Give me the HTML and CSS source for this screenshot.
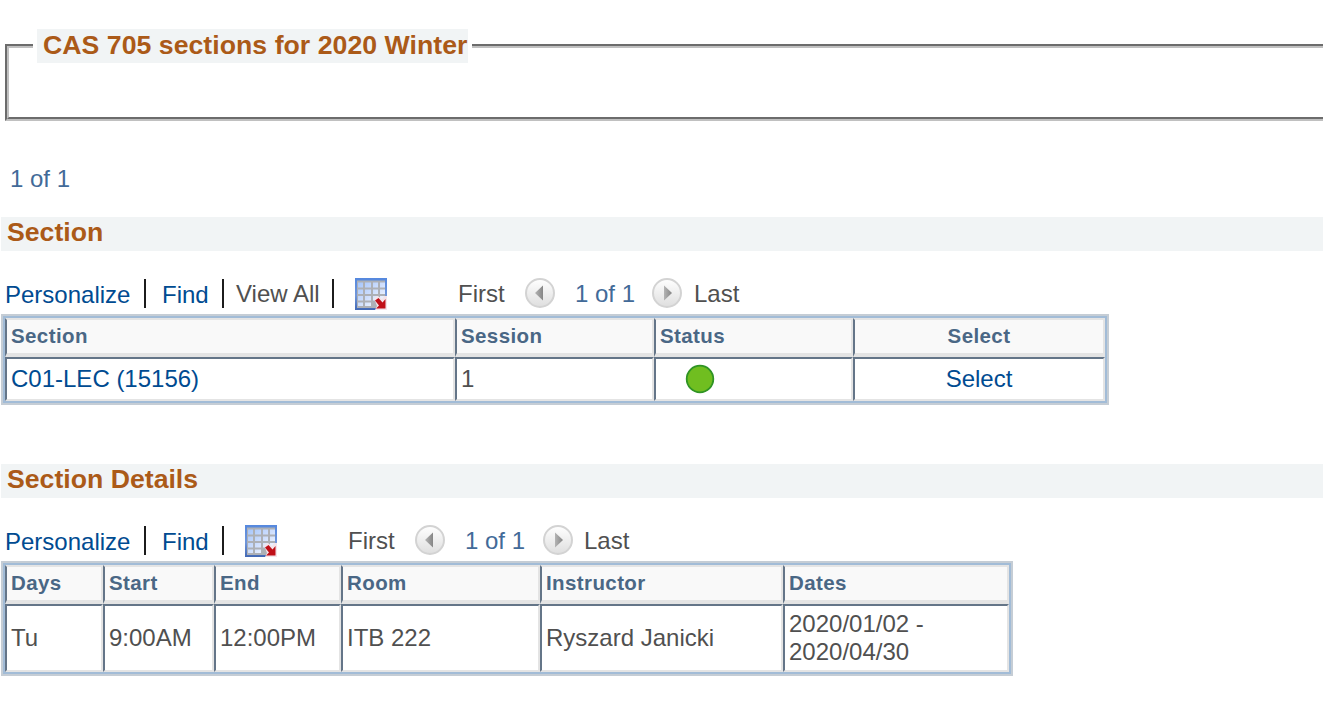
FILE: index.html
```html
<!DOCTYPE html>
<html lang="en">
<head>
<meta charset="utf-8">
<title>CAS 705 sections for 2020 Winter</title>
<link rel="stylesheet" href="styles.css">
</head>
<body>
<svg class="defs" width="0" height="0" aria-hidden="true">
  <defs>
    <linearGradient id="frame" x1="0" y1="0" x2="0" y2="1"><stop offset="0" stop-color="#5588de"/><stop offset=".55" stop-color="#7096da"/><stop offset="1" stop-color="#4268b4"/></linearGradient>
    <linearGradient id="cells" x1="0" y1="0" x2="1" y2="1"><stop offset="0" stop-color="#a6c6fc"/><stop offset=".5" stop-color="#cfdffd"/><stop offset="1" stop-color="#fff"/></linearGradient>
    <linearGradient id="disc" x1="0" y1="0" x2="0" y2="1"><stop offset="0" stop-color="#fff"/><stop offset="1" stop-color="#dedede"/></linearGradient>
    <linearGradient id="arrow" x1="0" y1="0" x2="1" y2="0"><stop offset="0" stop-color="#b4b4b4"/><stop offset="1" stop-color="#858585"/></linearGradient>
    <symbol id="grid" viewBox="0 0 32 32">
      <path fill="url(#frame)" d="M0 0h32v32H0z"/>
      <path fill="#adb0b6" d="M2 2.500h28v27.500H2z"/>
      <path fill="url(#cells)" d="M3 4.500h5v5H3zM10 4.500h6v5h-6zM18 4.500h5v5h-5zM25 4.500h5v5h-5zM3 11.500h5v4.500H3zM10 11.500h6v4.500h-6zM18 11.500h5v4.500h-5zM25 11.500h5v4.500h-5zM3 18h5v4.500H3zM10 18h6v4.500h-6zM18 18h5v4.500h-5zM25 18h5v4.500h-5zM3 24.500h5v3.500H3zM10 24.500h6v3.500h-6z"/>
      <path fill="#f3e4ea" d="M19 20l4-2 4 3 2-3h3v14H20l2-4z"/>
      <path fill="#c01018" d="M20 22.500l3.500-2.500 4 4.500L30.500 21v9.500H21l3-3z"/>
    </symbol>
    <symbol id="prev" viewBox="0 0 30 30"><circle cx="15" cy="15" r="14" fill="url(#disc)" stroke="#d3d3d3" stroke-width="2"/><path fill="url(#arrow)" d="M10 15l8-7.500v15z"/></symbol>
    <symbol id="next" viewBox="0 0 30 30"><circle cx="15" cy="15" r="14" fill="url(#disc)" stroke="#d3d3d3" stroke-width="2"/><path fill="url(#arrow)" d="M20 15l-8-7.500v15z"/></symbol>
  </defs>
</svg>
<fieldset class="summary"><legend><span>CAS 705 sections for 2020 Winter</span></legend></fieldset>
<div class="count">1 of 1</div>

<h2 class="bar">Section</h2>
<div class="tools tools-section">
  <a class="low">Personalize</a><i class="sep"></i><a class="low">Find</a><i class="sep"></i><span>View All</span><i class="sep"></i>
  <svg class="sheet"><use href="#grid"/></svg>
  <span>First</span><svg class="nav"><use href="#prev"/></svg><span class="range">1 of 1</span><svg class="nav"><use href="#next"/></svg><span>Last</span>
</div>
<div class="table table-section">
  <div class="th">Section</div><div class="th">Session</div><div class="th">Status</div><div class="th center">Select</div>
  <div class="td"><a>C01-LEC (15156)</a></div><div class="td">1</div><div class="td"><svg class="open" viewBox="0 0 30 30"><circle cx="15" cy="15" r="13.3" fill="#70be20" stroke="#2f9424" stroke-width="1.8"/></svg></div><div class="td center"><a>Select</a></div>
</div>

<h2 class="bar bar-details">Section Details</h2>
<div class="tools tools-details">
  <a class="low">Personalize</a><i class="sep"></i><a class="low">Find</a><i class="sep"></i>
  <svg class="sheet"><use href="#grid"/></svg>
  <span>First</span><svg class="nav"><use href="#prev"/></svg><span class="range">1 of 1</span><svg class="nav"><use href="#next"/></svg><span>Last</span>
</div>
<div class="table table-details">
  <div class="th">Days</div><div class="th">Start</div><div class="th">End</div><div class="th">Room</div><div class="th">Instructor</div><div class="th">Dates</div>
  <div class="td">Tu</div><div class="td">9:00AM</div><div class="td">12:00PM</div><div class="td">ITB 222</div><div class="td">Ryszard Janicki</div><div class="td">2020/01/02 -<br>2020/04/30</div>
</div>
</body>
</html>
```
FILE: styles.css
```css
* { box-sizing: border-box; }
html { overflow: hidden; }
body {
  margin: 0;
  padding-top: 29px;
  background: #fff;
  color: #505050;
  font: 24px/28px "Liberation Sans", Arial, sans-serif;
}
.defs { display: block; height: 0; }
a { color: #004b91; }
.summary {
  height: 92px;
  margin: 0 -10px 0 5px;
  padding: 0;
  border: 4px groove #c0c0c0;
}
.summary legend {
  height: 34px;
  margin-left: 24px;
  padding: 0 4px;
  color: #ab5a18;
  font-size: 26.67px;
  font-weight: bold;
  line-height: 32px;
}
.summary legend span {
  display: block;
  width: 431px;
  height: 34px;
  padding-left: 6px;
  background: #f1f4f5;
  letter-spacing: .03px;
  white-space: nowrap;
}
.count { margin: 44px 0 24px 10px; color: #426a98; }
.bar {
  height: 34px;
  margin: 0 0 0 1px;
  padding-left: 6px;
  background: #f1f4f5;
  color: #ab5a18;
  font-size: 26.67px;
  line-height: 30px;
}
.bar-details { margin-top: 59px; }
.tools {
  display: grid;
  align-items: start;
  height: 36px;
  margin: 27px 0 0 5px;
  white-space: nowrap;
}
.tools-section { grid-template-columns: 139px 18px 60px 14px 96px 23px 103px 67px 50px 77px 42px auto; }
.tools-details { grid-template-columns: 139px 18px 60px 23px 103px 67px 50px 78px 41px auto; }
.tools span { padding-top: 2px; }
.tools .low { padding-top: 3px; }
.tools .range { color: #426a98; }
.sep { width: 2px; height: 29px; margin-top: 1px; background: #1c1c1c; }
.sheet { width: 32px; height: 32px; }
.nav { width: 30px; height: 30px; }
.table {
  display: grid;
  margin-left: 1px;
  border: 2px solid #c5cdd5;
  outline: 2px solid #a2bcd7;
  outline-offset: -4px;
  padding: 2px;
}
.table-section {
  width: 1108px;
  grid-template-columns: 450px 199px 199px 252px;
  grid-template-rows: 39px 44px;
}
.table-details {
  width: 1012px;
  grid-template-columns: 98px 111px 127px 199px 243px 226px;
  grid-template-rows: 39px 68px;
}
.th, .td {
  border: solid #e4e4e4;
  border-left-color: #647588;
  padding-left: 4px;
}
.th {
  border-width: 2px 2px 4px;
  background: #f9f9f9;
  color: #4a6785;
  font-size: 20.5px;
  font-weight: bold;
  letter-spacing: .4px;
  line-height: 32px;
}
.td {
  display: flex;
  align-items: center;
  border-width: 2px;
  border-top-color: #647588;
}
.center { justify-content: center; padding-left: 0; text-align: center; }
.open { width: 30px; height: 30px; margin-left: 25px; }
```
